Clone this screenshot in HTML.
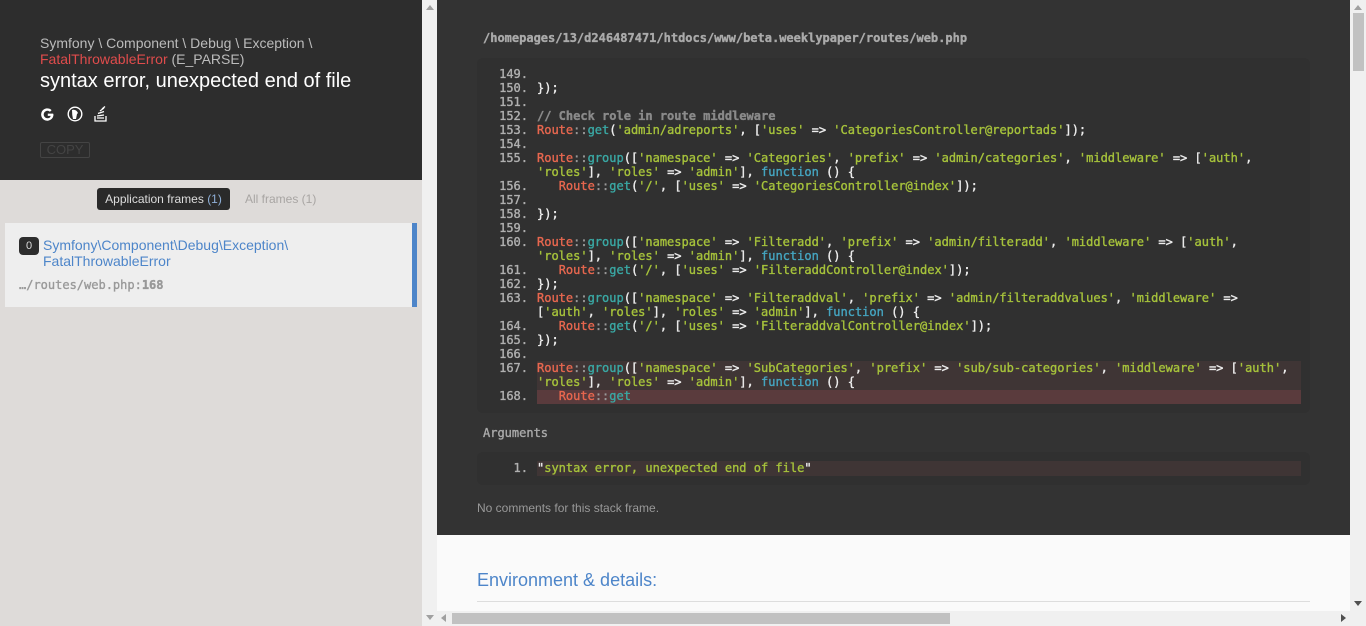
<!DOCTYPE html>
<html><head><meta charset="utf-8"><style>
*{margin:0;padding:0;box-sizing:border-box}
body{width:1366px;height:626px;overflow:hidden;background:#dedbd9;font-family:"Liberation Sans",sans-serif;position:relative}
.abs{position:absolute}
#left{left:0;top:0;width:422px;height:626px;background:#dedbd9}
#hdr{left:0;top:0;width:422px;height:180px;background:#2d2d2d}
.code{font-family:"DejaVu Sans Mono",monospace;font-size:12px;line-height:14px;white-space:pre;-webkit-text-stroke:0.35px currentColor}
.r{color:#e8674f}.t{color:#3aa8a4}.s{color:#a6c23b}.w{color:#eee}.g{color:#999}.k{color:#45a5c0}.c{color:#8a8a8a;font-weight:bold}
.n{color:#b0b0b0}
</style></head><body>
<div id="left" class="abs"></div>
<div id="hdr" class="abs">
 <div class="abs" style="left:40px;top:35px;font-size:14px;line-height:16px;color:#bbb">Symfony \ Component \ Debug \ Exception \<br><span style="color:#e04c4c">FatalThrowableError</span> (E_PARSE)</div>
 <div class="abs" style="left:40px;top:70px;font-size:20px;color:#fff">syntax error, unexpected end of file</div>
 <svg class="abs" style="left:40px;top:107px" width="15" height="15" viewBox="0 0 16 16"><path d="M14 7 H8.3 V9.4 H11.4 Q10.8 12 8 12 A4 4 0 1 1 10.6 5 L12.4 3.3 A6.6 6.6 0 1 0 14.4 8.3 Z" fill="#fff"/></svg>
 <svg class="abs" style="left:67px;top:106px" width="16" height="16" viewBox="0 0 16 16"><circle cx="8" cy="8" r="6.8" fill="none" stroke="#fff" stroke-width="1.4"/><path d="M5 4 Q9 3 11 7 L10 8 L9 13 L6 13 Q5 9 5 4Z" fill="#fff"/></svg>
 <svg class="abs" style="left:94px;top:106px" width="14" height="16" viewBox="0 0 14 16"><path d="M1 10 V15 H12 V10" fill="none" stroke="#fff" stroke-width="1.3"/><path d="M3 12 H10 M3 10 L10 9 M4 7.5 L10 5.5 M6 5 L10 2 M8 3 L11 0.5" stroke="#fff" stroke-width="1.3"/></svg>
 <div class="abs" style="left:40px;top:142px;width:50px;height:16px;border:1px solid #444;border-radius:2px;color:#444;font-size:13px;line-height:14px;text-align:center">COPY</div>
</div>
<div class="abs" style="left:97px;top:188px;width:133px;height:22px;background:#2a2a2a;border-radius:3px;color:#ddd;font-size:12px;line-height:22px;text-align:center">Application frames <span style="color:#8fb0d8">(1)</span></div>
<div class="abs" style="left:245px;top:188px;font-size:12px;line-height:22px;color:#a8a5a3">All frames (1)</div>
<div class="abs" style="left:5px;top:223px;width:412px;height:84px;background:#eeeeee;border-right:5px solid #4d85c9"></div>
<div class="abs" style="left:19px;top:237px;width:20px;height:18px;background:#2d2d2d;border-radius:4px;color:#ddd;font-size:11px;line-height:18px;text-align:center">0</div>
<div class="abs" style="left:43px;top:237px;font-size:14px;line-height:16px;color:#4d85c9">Symfony\Component\Debug\Exception\<br>FatalThrowableError</div>
<div class="abs code" style="left:19px;top:278px;color:#999">…/routes/web.php:<b>168</b></div>

<div class="abs" style="left:422px;top:0;width:15px;height:626px;background:#f0f0f0"></div>
<div class="abs" style="left:426px;top:5px;width:0;height:0;border-left:4px solid transparent;border-right:4px solid transparent;border-bottom:5px solid #a0a0a0"></div>

<div class="abs" style="left:437px;top:0;width:913px;height:535px;background:#333"></div>
<div class="abs" style="left:437px;top:535px;width:913px;height:76px;background:#fafafa"></div>
<div class="abs code" style="left:483px;top:31px;color:#aaa;font-weight:bold">/homepages/13/d246487471/htdocs/www/beta.weeklypaper/routes/web.php</div>
<div class="abs" style="left:477px;top:58px;width:833px;height:355px;background:#303030;border-radius:6px"></div>
<div class="abs" style="left:537px;top:361px;width:764px;height:29px;background:#3f3535"></div>
<div class="abs" style="left:537px;top:390px;width:764px;height:14px;background:#5a3b3d"></div>
<div class="abs code n" style="left:478px;top:67px;width:50px;text-align:right">149.
150.
151.
152.
153.
154.
155.

156.
157.
158.
159.
160.

161.
162.
163.

164.
165.
166.
167.

168.</div>
<div class="abs code w" style="left:537px;top:67px">
});

<span class="c">// Check role in route middleware</span>
<span class="r">Route</span><span class="g">::</span><span class="t">get</span>(<span class="s">'admin/adreports'</span>, [<span class="s">'uses'</span> =&gt; <span class="s">'CategoriesController@reportads'</span>]);

<span class="r">Route</span><span class="g">::</span><span class="t">group</span>([<span class="s">'namespace'</span> =&gt; <span class="s">'Categories'</span>, <span class="s">'prefix'</span> =&gt; <span class="s">'admin/categories'</span>, <span class="s">'middleware'</span> =&gt; [<span class="s">'auth'</span>,
<span class="s">'roles'</span>], <span class="s">'roles'</span> =&gt; <span class="s">'admin'</span>], <span class="k">function</span> () {
   <span class="r">Route</span><span class="g">::</span><span class="t">get</span>(<span class="s">'/'</span>, [<span class="s">'uses'</span> =&gt; <span class="s">'CategoriesController@index'</span>]);

});

<span class="r">Route</span><span class="g">::</span><span class="t">group</span>([<span class="s">'namespace'</span> =&gt; <span class="s">'Filteradd'</span>, <span class="s">'prefix'</span> =&gt; <span class="s">'admin/filteradd'</span>, <span class="s">'middleware'</span> =&gt; [<span class="s">'auth'</span>,
<span class="s">'roles'</span>], <span class="s">'roles'</span> =&gt; <span class="s">'admin'</span>], <span class="k">function</span> () {
   <span class="r">Route</span><span class="g">::</span><span class="t">get</span>(<span class="s">'/'</span>, [<span class="s">'uses'</span> =&gt; <span class="s">'FilteraddController@index'</span>]);
});
<span class="r">Route</span><span class="g">::</span><span class="t">group</span>([<span class="s">'namespace'</span> =&gt; <span class="s">'Filteraddval'</span>, <span class="s">'prefix'</span> =&gt; <span class="s">'admin/filteraddvalues'</span>, <span class="s">'middleware'</span> =&gt;
[<span class="s">'auth'</span>, <span class="s">'roles'</span>], <span class="s">'roles'</span> =&gt; <span class="s">'admin'</span>], <span class="k">function</span> () {
   <span class="r">Route</span><span class="g">::</span><span class="t">get</span>(<span class="s">'/'</span>, [<span class="s">'uses'</span> =&gt; <span class="s">'FilteraddvalController@index'</span>]);
});

<span class="r">Route</span><span class="g">::</span><span class="t">group</span>([<span class="s">'namespace'</span> =&gt; <span class="s">'SubCategories'</span>, <span class="s">'prefix'</span> =&gt; <span class="s">'sub/sub-categories'</span>, <span class="s">'middleware'</span> =&gt; [<span class="s">'auth'</span>,
<span class="s">'roles'</span>], <span class="s">'roles'</span> =&gt; <span class="s">'admin'</span>], <span class="k">function</span> () {
   <span class="r">Route</span><span class="g">::</span><span class="t">get</span></div>
<div class="abs code" style="left:483px;top:426px;color:#aaa">Arguments</div>
<div class="abs" style="left:477px;top:452px;width:833px;height:33px;background:#303030;border-radius:6px"></div>
<div class="abs" style="left:537px;top:461px;width:764px;height:15px;background:#3f3535"></div>
<div class="abs code n" style="left:478px;top:461px;width:50px;text-align:right">1.</div>
<div class="abs code s" style="left:537px;top:461px"><span class="w">"</span>syntax error, unexpected end of file<span class="w">"</span></div>
<div class="abs" style="left:477px;top:501px;font-size:12px;color:#999">No comments for this stack frame.</div>
<div class="abs" style="left:477px;top:570px;font-size:18px;color:#4d85c9">Environment &amp; details:</div>
<div class="abs" style="left:477px;top:601px;width:833px;height:1px;background:#ddd"></div>

<div class="abs" style="left:1350px;top:0;width:16px;height:626px;background:#f0f0f0"></div>
<div class="abs" style="left:1353px;top:13px;width:11px;height:58px;background:#c1c1c1"></div>
<div class="abs" style="left:1354px;top:5px;width:0;height:0;border-left:4px solid transparent;border-right:4px solid transparent;border-bottom:5px solid #a0a0a0"></div>
<div class="abs" style="left:1354px;top:601px;width:0;height:0;border-left:4px solid transparent;border-right:4px solid transparent;border-top:5px solid #505050"></div>
<div class="abs" style="left:422px;top:611px;width:928px;height:15px;background:#f0f0f0"></div>
<div class="abs" style="left:452px;top:613px;width:498px;height:11px;background:#c1c1c1"></div>
<div class="abs" style="left:426px;top:615px;width:0;height:0;border-left:4px solid transparent;border-right:4px solid transparent;border-top:5px solid #a0a0a0"></div>
<div class="abs" style="left:441px;top:614px;width:0;height:0;border-top:4px solid transparent;border-bottom:4px solid transparent;border-right:5px solid #a0a0a0"></div>
<div class="abs" style="left:1341px;top:614px;width:0;height:0;border-top:4px solid transparent;border-bottom:4px solid transparent;border-left:5px solid #505050"></div>
</body></html>
